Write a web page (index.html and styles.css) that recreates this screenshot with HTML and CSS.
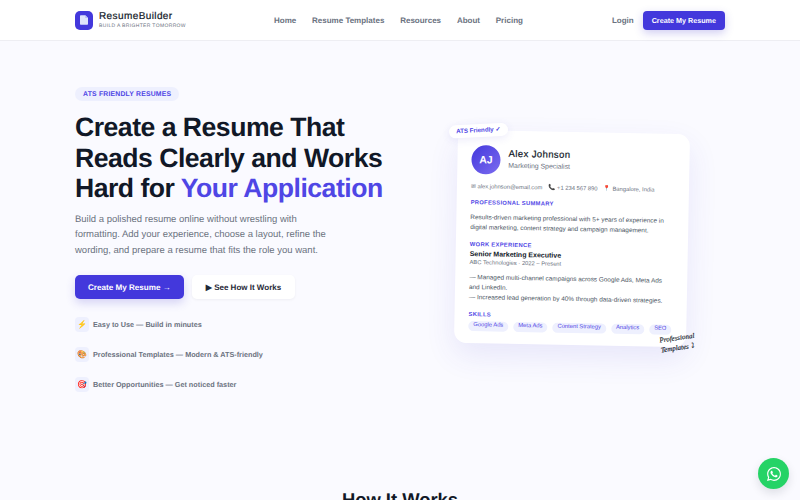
FILE: index.html
```html
<!DOCTYPE html>
<html>
<head>
    <title>ResumeBuilder</title>
    <link rel="stylesheet" href="styles.css">
</head>
<body>

<div class="header">
    <div class="brand">
        <div class="logo">
            <svg width="8" height="10" viewBox="0 0 12 14"><path d="M1 0h7l4 4v9a1 1 0 0 1-1 1H1a1 1 0 0 1-1-1V1a1 1 0 0 1 1-1z" fill="#dfe3fb"/><path d="M8 0l4 4H8z" fill="#b6bcf5"/></svg>
        </div>
        <div>
            <div class="brandname">ResumeBuilder</div>
            <div class="brandtag">BUILD A BRIGHTER TOMORROW</div>
        </div>
    </div>
    <div class="menu">
        <a class="menuitem">Home</a>
        <a class="menuitem">Resume Templates</a>
        <a class="menuitem">Resources</a>
        <a class="menuitem">About</a>
        <a class="menuitem">Pricing</a>
    </div>
    <div class="actions">
        <a class="login">Login</a>
        <a class="navbutton">Create My Resume</a>
    </div>
</div>

<div class="hero">
    <div class="herotext">
        <span class="pill">ATS FRIENDLY RESUMES</span>
        <h1>Create a Resume That Reads Clearly and Works Hard for <span class="accent">Your Application</span></h1>
        <p class="lead">Build a polished resume online without wrestling with formatting. Add your experience, choose a layout, refine the wording, and prepare a resume that fits the role you want.</p>
        <div class="buttons">
            <a class="primary">Create My Resume →</a>
            <a class="secondary">▶ See How It Works</a>
        </div>
        <div class="features">
            <div class="feature"><span class="icon">⚡</span>Easy to Use — Build in minutes</div>
            <div class="feature"><span class="icon">🎨</span>Professional Templates — Modern &amp; ATS-friendly</div>
            <div class="feature"><span class="icon">🎯</span>Better Opportunities — Get noticed faster</div>
        </div>
    </div>

    <div class="cardwrap">
        <div class="card">
            <div class="person">
                <div class="avatar">AJ</div>
                <div class="who">
                    <div class="name">Alex Johnson</div>
                    <div class="role">Marketing Specialist</div>
                </div>
            </div>
            <div class="contact">
                <span>✉ alex.johnson@email.com</span>
                <span>📞 +1 234 567 890</span>
                <span>📍 Bangalore, India</span>
            </div>
            <div class="cardhead summary">PROFESSIONAL SUMMARY</div>
            <p class="cardtext">Results-driven marketing professional with 5+ years of experience in digital marketing, content strategy and campaign management.</p>
            <div class="cardhead work">WORK EXPERIENCE</div>
            <div class="jobtitle">Senior Marketing Executive</div>
            <div class="company">ABC Technologies · 2022 – Present</div>
            <p class="cardtext duties">— Managed multi-channel campaigns across Google Ads, Meta Ads and LinkedIn.<br>— Increased lead generation by 40% through data-driven strategies.</p>
            <div class="cardhead skillhead">SKILLS</div>
            <div class="skills">
                <span class="skill">Google Ads</span>
                <span class="skill">Meta Ads</span>
                <span class="skill">Content Strategy</span>
                <span class="skill">Analytics</span>
                <span class="skill">SEO</span>
            </div>
            <div class="badge">ATS Friendly ✓</div>
            <div class="note">Professional<br>Templates ⤵</div>
        </div>
    </div>
</div>

<h2 class="howto">How It Works</h2>

<a class="whatsapp">
    <svg width="14" height="14" viewBox="0 0 24 24"><path fill="#fff" d="M17.5 14.4c-.3-.1-1.800-.9-2-1-.3-.1-.5-.1-.7.200-.2.300-.8 1-.9 1.200-.2.200-.3.200-.6.100-.3-.2-1.300-.5-2.400-1.500-.9-.8-1.500-1.800-1.700-2.100-.2-.3 0-.5.100-.6.100-.1.300-.3.400-.5.200-.2.200-.3.300-.5.100-.2.100-.4 0-.5-.1-.2-.7-1.700-.9-2.300-.3-.6-.5-.5-.7-.5h-.6c-.2 0-.5.100-.8.400-.3.300-1 1-1 2.500s1.100 2.900 1.200 3.100c.2.200 2.100 3.200 5.100 4.500.7.300 1.300.5 1.700.6.700.2 1.400.2 1.900.1.600-.1 1.800-.7 2-1.400.2-.7.2-1.300.2-1.400-.1-.2-.3-.2-.6-.4zM12 21.800c-1.800 0-3.500-.5-5-1.400l-.4-.2-3.700 1 1-3.600-.2-.4c-1-1.600-1.500-3.300-1.500-5.200 0-5.400 4.400-9.800 9.900-9.800 2.600 0 5.100 1 7 2.900 1.900 1.900 2.900 4.300 2.900 7 0 5.400-4.500 9.700-10 9.700zM20.500 3.500C18.200 1.200 15.200 0 12 0 5.500 0 .2 5.300.2 11.900c0 2.100.5 4.100 1.600 5.900L0 24l6.300-1.600c1.700.9 3.700 1.400 5.700 1.400 6.500 0 11.800-5.300 11.800-11.900 0-3.200-1.200-6.200-3.300-8.400z"/></svg>
</a>

</body>
</html>
```

FILE: styles.css
```css
body {
    margin: 0;
    height: 500px;
    overflow: hidden;
    background: #fafaff;
    font-family: "Liberation Sans", Arial, sans-serif;
    color: #111827;
    text-rendering: geometricPrecision;
}

a {
    text-decoration: none;
}

.header {
    display: flex;
    align-items: center;
    height: 40px;
    padding: 0 75px;
    background: #ffffff;
    border-bottom: solid 1px #eeeef3;
}

.brand {
    display: flex;
    align-items: center;
    gap: 6px;
    width: 199px;
}

.logo {
    display: flex;
    align-items: center;
    justify-content: center;
    width: 18px;
    height: 19px;
    border-radius: 5px;
    background: #4338dc;
}

.brandname {
    font-size: 10px;
    letter-spacing: 0.4px;
    line-height: 12px;
    -webkit-text-stroke: 0.2px #111827;
}

.brandtag {
    font-size: 5px;
    letter-spacing: 0.35px;
    line-height: 7px;
    color: #6b7280;
}

.menu {
    display: flex;
    flex: 1;
    gap: 15.8px;
}

.menuitem {
    font-size: 8px;
    font-weight: 700;
    color: #6b7280;
}

.actions {
    display: flex;
    align-items: center;
    gap: 9px;
}

.login {
    font-size: 8px;
    font-weight: 700;
    color: #6b7280;
}

.navbutton {
    padding: 5px 9px;
    border-radius: 4px;
    background: #4338dc;
    color: #ffffff;
    font-size: 7.2px;
    font-weight: 700;
    line-height: 9px;
    box-shadow: 0 3px 8px rgba(67, 56, 202, 0.25);
}

.hero {
    display: flex;
    justify-content: space-between;
    padding: 46px 112.5px 0 75px;
}

.herotext {
    width: 320px;
}

.pill {
    display: table;
    padding: 2.5px 8px;
    border-radius: 8px;
    background: #eef0fe;
    color: #4f46e5;
    font-size: 6.85px;
    font-weight: 700;
    line-height: 9px;
    letter-spacing: 0.2px;
}

h1 {
    margin: 11px 0 0 0;
    font-size: 26.6px;
    font-weight: 700;
    line-height: 30.5px;
    letter-spacing: -0.5px;
}

.accent {
    color: #4f46e5;
}

.lead {
    margin: 8px 0 0 0;
    width: 255px;
    font-size: 9.5px;
    line-height: 15.5px;
    color: #6b7280;
}

.buttons {
    display: flex;
    gap: 8px;
    margin-top: 17px;
}

.primary {
    padding: 6.5px 13px;
    border-radius: 5px;
    background: #4338dc;
    color: #ffffff;
    font-size: 8.1px;
    font-weight: 700;
    line-height: 11px;
    box-shadow: 0 4px 10px rgba(67, 56, 202, 0.2);
}

.secondary {
    padding: 6.5px 14px;
    border-radius: 5px;
    background: #ffffff;
    color: #1f2937;
    font-size: 8px;
    font-weight: 700;
    line-height: 11px;
    box-shadow: 0 1px 3px rgba(17, 24, 39, 0.05);
}

.features {
    display: flex;
    flex-direction: column;
    gap: 15px;
    margin-top: 17.5px;
}

.feature {
    display: flex;
    align-items: center;
    gap: 4px;
    font-size: 7.25px;
    font-weight: 700;
    color: #6b7280;
}

.icon {
    display: flex;
    align-items: center;
    justify-content: center;
    width: 14px;
    height: 15px;
    border-radius: 4px;
    background: #eef0fe;
    font-size: 8px;
}

.cardwrap {
    padding-top: 44.5px;
}

.card {
    position: relative;
    box-sizing: border-box;
    width: 232px;
    height: 213px;
    padding: 15px 14px 12px 14px;
    border-radius: 12px;
    background: #ffffff;
    box-shadow: 0 12px 30px rgba(67, 56, 202, 0.1);
    transform: rotate(1.1deg);
}

.person {
    display: flex;
    align-items: center;
    gap: 8px;
}

.avatar {
    display: flex;
    align-items: center;
    justify-content: center;
    width: 29px;
    height: 29px;
    border-radius: 50%;
    background: linear-gradient(135deg, #4338dc, #7c6cf0);
    color: #ffffff;
    font-size: 10.5px;
    font-weight: 700;
}

.who {
    margin-bottom: 1.5px;
}

.name {
    font-size: 9.5px;
    letter-spacing: 0.4px;
    line-height: 11px;
    -webkit-text-stroke: 0.2px #111827;
}

.role {
    margin-top: 3px;
    font-size: 6.9px;
    line-height: 8px;
    color: #6b7280;
}

.contact {
    display: flex;
    gap: 6px;
    margin-top: 10px;
    font-size: 5.8px;
    line-height: 7px;
    color: #6b7280;
}

.cardhead {
    font-size: 5.8px;
    font-weight: 700;
    line-height: 7px;
    letter-spacing: 0.3px;
    color: #4f46e5;
}

.cardhead.summary {
    margin-top: 9px;
}

.cardhead.work {
    margin-top: 9.5px;
}

.cardhead.skillhead {
    margin-top: 9.5px;
}

.cardtext {
    margin: 5.5px 0 0 0;
    font-size: 6.4px;
    line-height: 10px;
    color: #4b5563;
}

.cardtext.duties {
    margin-top: 5.5px;
}

.jobtitle {
    margin-top: 1.5px;
    font-size: 7px;
    font-weight: 700;
    line-height: 8px;
}

.company {
    margin-top: 1.5px;
    font-size: 5.8px;
    line-height: 7px;
    color: #6b7280;
}

.skills {
    display: flex;
    gap: 5px;
    margin-top: 1.5px;
}

.skill {
    padding: 1.5px 5px;
    border-radius: 5px;
    background: #eef0fe;
    color: #4f46e5;
    font-size: 5.8px;
    line-height: 7px;
    white-space: nowrap;
}

.badge {
    position: absolute;
    top: -6px;
    left: -9px;
    padding: 3px 7px;
    border-radius: 8px;
    background: #ffffff;
    color: #4f46e5;
    font-size: 6.2px;
    font-weight: 700;
    box-shadow: 0 2px 8px rgba(67, 56, 202, 0.1);
    transform: rotate(-4deg);
}

.note {
    position: absolute;
    right: -9px;
    bottom: -6px;
    font-family: "Liberation Serif", serif;
    font-style: italic;
    font-size: 7px;
    line-height: 10px;
    color: #111827;
    -webkit-text-stroke: 0.15px #111827;
    transform: rotate(-9deg);
}

.howto {
    position: absolute;
    top: 489px;
    left: 0;
    width: 100%;
    margin: 0;
    text-align: center;
    font-size: 18.4px;
    font-weight: 700;
}

.whatsapp {
    position: fixed;
    right: 11px;
    bottom: 11px;
    display: flex;
    align-items: center;
    justify-content: center;
    width: 31px;
    height: 31px;
    border-radius: 50%;
    background: #25d366;
    box-shadow: 0 4px 10px rgba(17, 24, 39, 0.12);
}
```
